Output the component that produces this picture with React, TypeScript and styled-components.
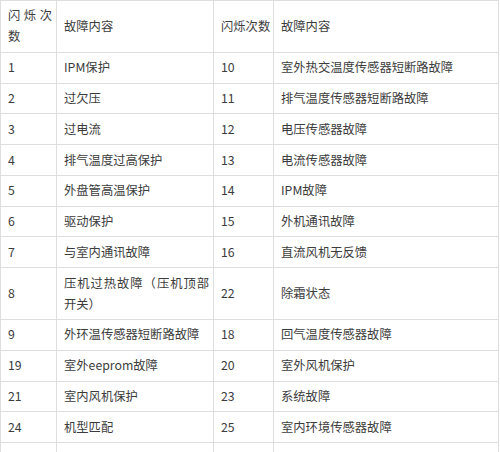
import React from "react";
import styled, { createGlobalStyle } from "styled-components";

const GlobalStyle = createGlobalStyle`
  html, body {
    margin: 0;
    padding: 0;
    background: #ffffff;
  }
  body {
    font-family: "Noto Sans CJK SC", "Noto Sans", sans-serif;
  }
`;

const Table = styled.table`
  width: 498px;
  border-collapse: collapse;
  table-layout: fixed;
  font-size: 12.3px;
  line-height: 21px;
  color: #3c3c3c;
`;

const Cell = styled.td<{ nowrap?: boolean }>`
  border: 1px solid #dedede;
  padding: 4.4px 4px 4.4px 7px;
  vertical-align: middle;
  text-align: justify;
  word-break: normal;
  ${(props) => (props.nowrap ? "white-space: nowrap;" : "")}
`;

const rows: [string, string, string, string][] = [
  ["1", "IPM保护", "10", "室外热交温度传感器短断路故障"],
  ["2", "过欠压", "11", "排气温度传感器短断路故障"],
  ["3", "过电流", "12", "电压传感器故障"],
  ["4", "排气温度过高保护", "13", "电流传感器故障"],
  ["5", "外盘管高温保护", "14", "IPM故障"],
  ["6", "驱动保护", "15", "外机通讯故障"],
  ["7", "与室内通讯故障", "16", "直流风机无反馈"],
  ["8", "压机过热故障（压机顶部开关）", "22", "除霜状态"],
  ["9", "外环温传感器短断路故障", "18", "回气温度传感器故障"],
  ["19", "室外eeprom故障", "20", "室外风机保护"],
  ["21", "室内风机保护", "23", "系统故障"],
  ["24", "机型匹配", "25", "室内环境传感器故障"],
  ["26", "室内盘管传感器故障", "27", "室内EEPROM故障"],
];

const App: React.FC = () => (
  <>
    <GlobalStyle />
    <Table>
      <colgroup>
        <col style={{ width: 56 }} />
        <col style={{ width: 157 }} />
        <col style={{ width: 60 }} />
        <col style={{ width: 225 }} />
      </colgroup>
      <tbody>
        <tr>
          <Cell>闪烁次数</Cell>
          <Cell>故障内容</Cell>
          <Cell nowrap>闪烁次数</Cell>
          <Cell>故障内容</Cell>
        </tr>
        {rows.map(([a, b, c, d]) => (
          <tr key={a}>
            <Cell>{a}</Cell>
            <Cell>{b}</Cell>
            <Cell>{c}</Cell>
            <Cell>{d}</Cell>
          </tr>
        ))}
      </tbody>
    </Table>
  </>
);

export default App;
